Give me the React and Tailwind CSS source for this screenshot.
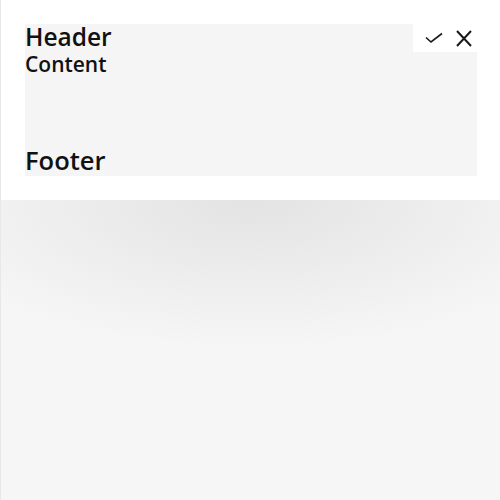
const CheckIcon = () => (
  <svg width="18" height="12" viewBox="0 0 18 12" fill="none" stroke="#1a1a1a" strokeWidth="1.6">
    <path d="M1 5.5 6 10 17 1.5" />
  </svg>
);

const CloseIcon = () => (
  <svg width="16" height="17" viewBox="0 0 16 17" fill="none" stroke="#1a1a1a" strokeWidth="2">
    <path d="M1 1l14 15M15 1 1 16" />
  </svg>
);

const App = () => {
  return (
    <div className="min-h-screen flex flex-col border-l border-[#e8e8e8] font-['Open_Sans',sans-serif] text-[#111]">
      <div className="bg-white pt-6 pb-6 pl-6 pr-[23px]">
        <div className="h-[152px] bg-[#f5f5f5] flex flex-col">
          <div className="flex items-start justify-between h-[28px]">
            <h1 className="text-[24.5px] leading-[26px] font-semibold">Header</h1>
            <div className="bg-white h-[28px] w-[64px] flex items-center justify-end gap-[13px] pr-[5px]">
              <CheckIcon />
              <CloseIcon />
            </div>
          </div>
          <div className="text-[21px] leading-[24px] font-semibold">Content</div>
          <div className="mt-auto text-[25.5px] leading-[28px] font-semibold pb-[2px]">Footer</div>
        </div>
      </div>
      <div className="flex-1 bg-[#f7f7f7] bg-[radial-gradient(ellipse_350px_150px_at_50%_0%,#e3e3e3,#f6f6f6)]" />
    </div>
  );
};

export default App;
